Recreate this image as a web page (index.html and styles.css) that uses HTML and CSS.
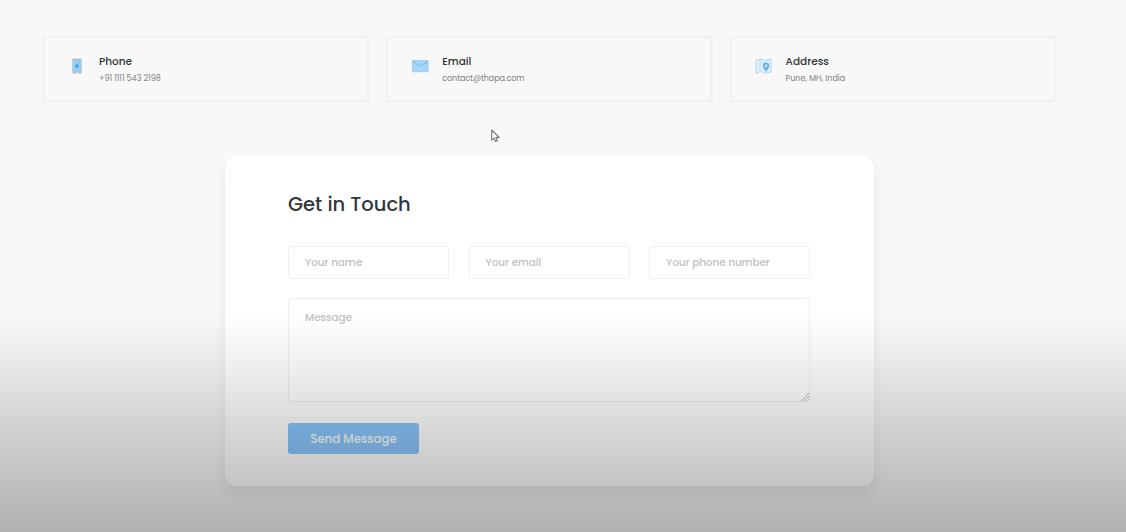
FILE: index.html
```html
<!DOCTYPE html>
<html lang="en">
<head>
<meta charset="utf-8">
<title>Contact</title>
<link rel="stylesheet" href="styles.css">
</head>
<body>
<main class="page">
  <section class="info">
    <article class="info-card">
      <svg class="icon" viewBox="0 0 20 20"><rect x="4.3" y="2.6" width="9.4" height="15" rx="1.3" fill="#b5bdc2"/><rect x="5" y="4.3" width="8" height="11" fill="#8dcefb"/><path d="M9 8.2v3.6M7.4 10h3.2" stroke="#3b91d4" stroke-width="1.3"/><circle cx="9" cy="16.4" r=".6" fill="#fff"/></svg>
      <div class="info-body"><h2 class="info-title">Phone</h2><p class="info-text">+91 1111 543 2198</p></div>
    </article>
    <article class="info-card">
      <svg class="icon" viewBox="0 0 20 20"><rect x="1.5" y="4.5" width="15.6" height="11.2" rx=".7" fill="#a5d5fc" stroke="#8fc4f0" stroke-width=".7"/><path d="M1.7 5.3l6.5 4.3q1.1.7 2.2 0l6.5-4.3" fill="none" stroke="#73aede" stroke-width=".9"/></svg>
      <div class="info-body"><h2 class="info-title">Email</h2><p class="info-text info-email">contact@thapa.com</p></div>
    </article>
    <article class="info-card">
      <svg class="icon" viewBox="0 0 20 20"><path d="M1 4.4l4.2-1.3 5 1.3 5.9-1.4v13l-5.5 1.3-5.4-1.7L1 17.4z" fill="#dceffb" stroke="#a9cfe5" stroke-width=".8"/><path d="M5.2 3.2v12.4" stroke="#bddced" stroke-width=".7"/><path d="M11 16c-.5-1.8-3.3-3.9-3.3-6.1a3.3 3.3 0 0 1 6.6 0c0 2.2-2.8 4.3-3.3 6.1z" fill="#68b2ee"/><circle cx="11" cy="9.8" r="1.2" fill="#d6edff"/></svg>
      <div class="info-body"><h2 class="info-title">Address</h2><p class="info-text">Pune, MH, India</p></div>
    </article>
  </section>
  <form class="contact">
    <h1 class="heading">Get in Touch</h1>
    <div class="fields">
      <input class="field" type="text" placeholder="Your name">
      <input class="field" type="email" placeholder="Your email">
      <input class="field" type="tel" placeholder="Your phone number">
    </div>
    <textarea class="field message" placeholder="Message"></textarea>
    <button class="send" type="button">Send Message</button>
  </form>
</main>
<div class="shade"></div>
<svg class="cursor" viewBox="0 0 10 14"><path d="M1.7 1v10.2l2.4-2.1 1.5 3.4 1.9-.8L6 8.4h3.2z" fill="#fafafa" stroke="#777" stroke-width="1.1" stroke-linejoin="round"/></svg>
</body>
</html>
```
FILE: styles.css
```css
* { box-sizing: border-box; }
body { margin: 0; height: 532px; overflow: hidden; background: #f8f8f8; font-family: Poppins, Inter, sans-serif; }
h1, h2, p { margin: 0; }
.page { padding: 36px 71px 0 43px; }
.info { display: grid; grid-template-columns: repeat(3, 325.5px); column-gap: 17.8px; }
.info-card { height: 66px; display: flex; align-items: flex-start; gap: 11px; padding: 17px 0 0 23px; border: 2px solid #f1f1f1; box-shadow: 0 0 2px #f1f1f1; }
.icon { width: 20px; height: 20px; margin-top: 1px; flex: none; }
.info-title { font-size: 10.5px; line-height: 14px; font-weight: 500; color: #303435; white-space: nowrap; }
.info-text { margin-top: 4px; font-size: 8px; line-height: 12px; color: #808080; white-space: nowrap; }
.info-email { letter-spacing: -.08px; }
.contact { width: 649px; height: 330px; margin: 54px 0 0 182px; padding: 34px 64px 0 63px; border-radius: 12px; background: #fff; box-shadow: 0 8px 8px rgba(0,0,0,.035), 0 8px 0 7px rgba(0,0,0,.014); }
.heading { height: 29px; font-size: 19.5px; line-height: 29px; font-weight: 500; color: #30383b; white-space: nowrap; }
.fields { display: grid; grid-template-columns: repeat(3, 161px); justify-content: space-between; margin-top: 27px; }
.field { font-family: inherit; font-size: 10.5px; font-weight: 500; border: 1px solid #f0f0f0; border-radius: 3px; background: transparent; outline: 0; box-shadow: 0 0 1px #eee; }
input.field { width: 100%; height: 33px; padding: 1px 16px 0; }
.field::placeholder { color: #c1c1c1; opacity: 1; letter-spacing: -.1px; }
.message { display: block; width: 522px; height: 104px; margin-top: 19px; padding: 11px 16px; line-height: 16px; resize: vertical; overflow: hidden; }
.message::-webkit-resizer { background: linear-gradient(135deg, transparent 72%, #bbb 72% 76%, transparent 76% 81%, #bbb 81% 86%, transparent 86% 91%, #bbb 91% 95%, transparent 95%); }
.send { display: block; width: 131px; height: 31px; margin-top: 21px; padding: 1px 0 0; border: 0; border-radius: 3px; background: #8ac6fd; color: #f7fafa; font: 500 11.8px/31px Poppins, Inter, sans-serif; }
.shade { position: absolute; inset: 315px 0 0; pointer-events: none; background: linear-gradient(rgba(0,0,0,0), rgba(0,0,0,.055) 20%, rgba(0,0,0,.15) 50%, rgba(0,0,0,.22) 75%, rgba(0,0,0,.29)); }
.cursor { position: absolute; left: 490px; top: 129px; width: 10px; height: 14px; }
```
